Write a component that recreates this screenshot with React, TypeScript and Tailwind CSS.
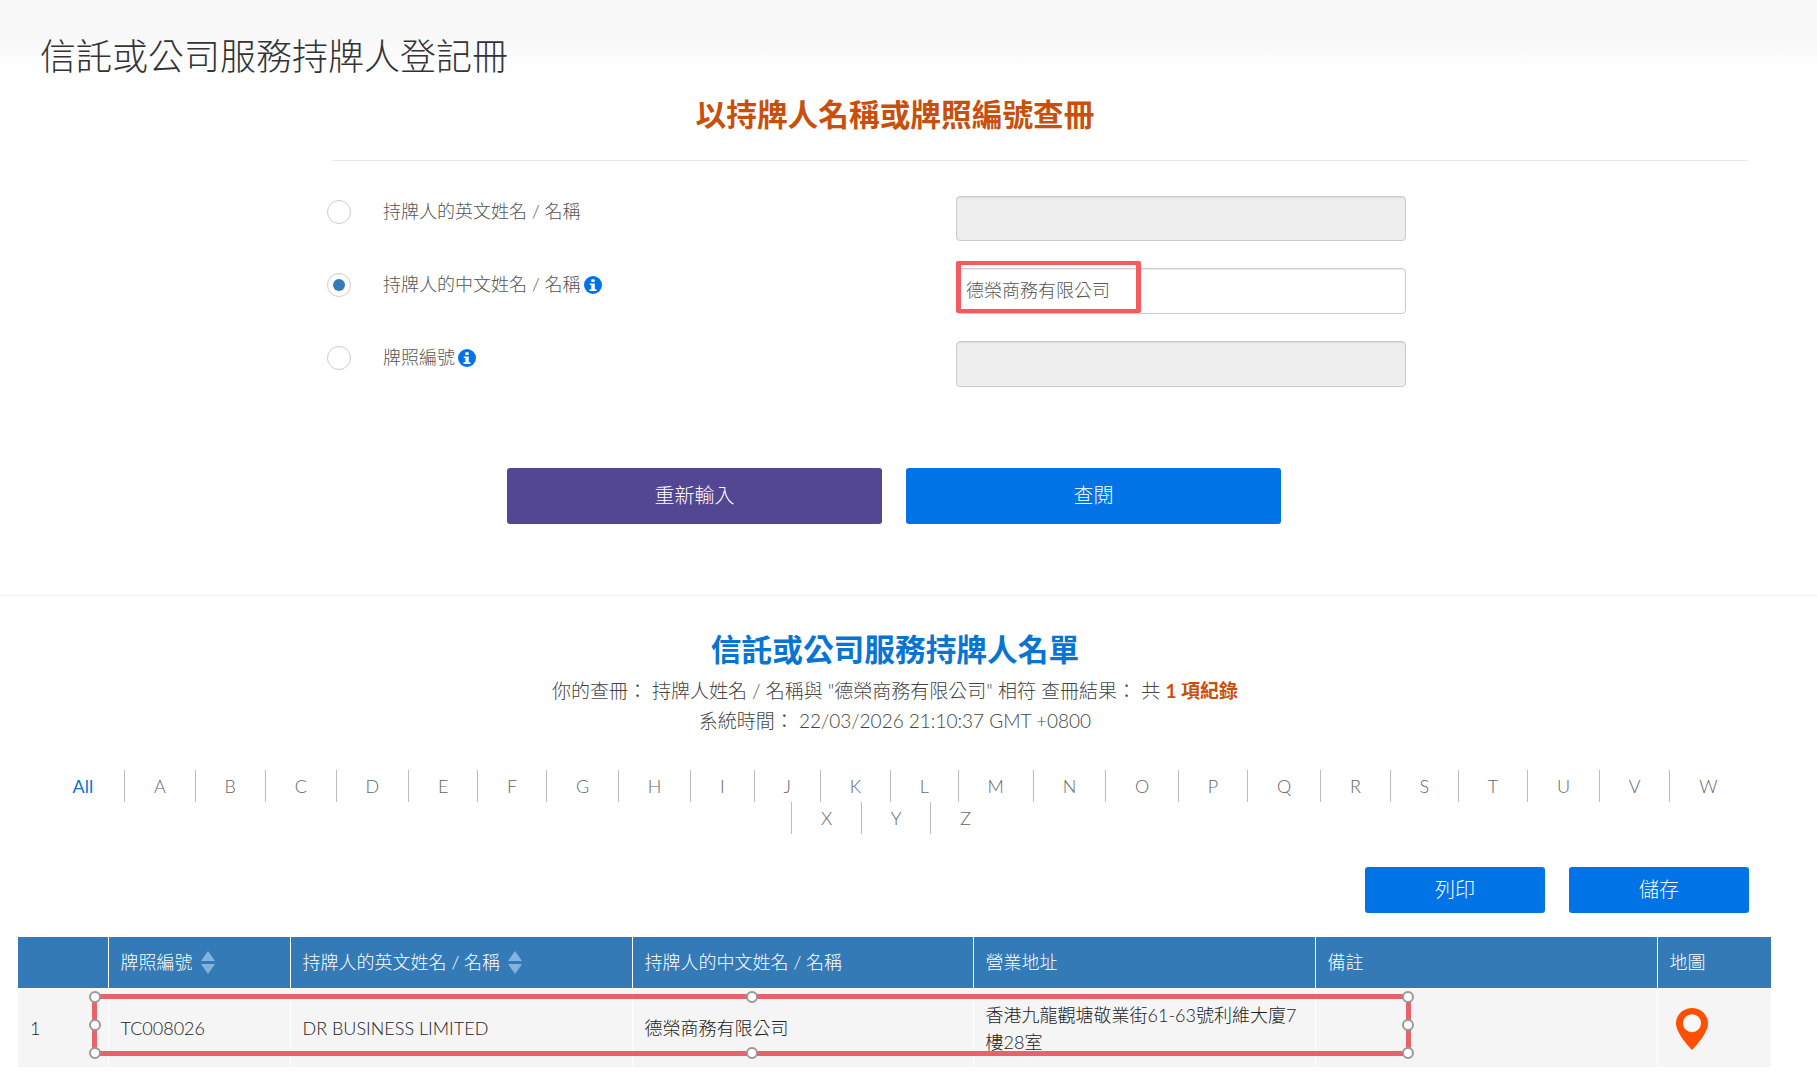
import React from "react";

const letters = ["A","B","C","D","E","F","G","H","I","J","K","L","M","N","O","P","Q","R","S","T","U","V","W","X","Y","Z"];

function InfoIcon() {
  return (
    <svg viewBox="0 0 18 18" className="w-[18px] h-[18px] shrink-0 ml-[3px]">
      <circle cx="9" cy="9" r="9" fill="#0073e6" />
      <rect x="7.2" y="3.2" width="3.6" height="2.8" rx="1" fill="#fff" />
      <path d="M5.8 7.4h5v5.8h1.7V15h-7v-1.8h1.8V9.1H5.8z" fill="#fff" />
    </svg>
  );
}

function SortIcon() {
  return (
    <svg viewBox="0 0 14 23" className="w-[14px] h-[23px] ml-[8px] shrink-0">
      <path d="M7 0L14 10H0z" fill="#83b4e0" />
      <path d="M7 23L0 13h14z" fill="#83b4e0" />
    </svg>
  );
}

function PinIcon() {
  return (
    <svg viewBox="0 0 32 42" className="w-[32px] h-[42px] ml-[18px]">
      <path d="M16 0C7 0 0 7 0 15.5 0 26 16 42 16 42s16-16 16-26.5C32 7 25 0 16 0z" fill="#ff4f00" />
      <circle cx="16" cy="15.2" r="9" fill="#f8f8f8" />
    </svg>
  );
}

function FormRow({ label, checked, info, value, inputClass }: { label: string; checked?: boolean; info?: boolean; value?: string; inputClass?: string }) {
  return (
    <div className="flex h-[73px] items-start">
      <div className="w-[56px] pt-[5px]">
        <span className="flex w-[24px] h-[24px] items-center justify-center rounded-full border border-[#ccc] bg-white">
          {checked && <span className="w-[12px] h-[12px] rounded-full bg-[#337ab7]" />}
        </span>
      </div>
      <div className="w-[573px] flex items-center h-[27px] mt-[3px] text-[18px] text-[#555] font-light">
        <span>{label}</span>
        {info && <InfoIcon />}
      </div>
      <div className="relative w-[450px]">
        <input
          readOnly
          disabled={!checked}
          value={value ?? ""}
          className={`w-full px-[9px] pb-[4px] rounded-[4px] border border-[#ccc] text-[18px] font-light text-[#555] shadow-[inset_0_1px_1px_rgba(0,0,0,0.08)] ${checked ? "bg-white" : "bg-[#eee]"} ${inputClass ?? "h-[46px]"}`}
        />
        {checked && <div className="absolute left-0 top-[-7px] w-[185px] h-[52px] rounded-[2px] border-x-[5px] border-y-[4px] border-[#f55a5f]" />}
      </div>
    </div>
  );
}

const columns = [
  { w: "w-[90px]", label: "" },
  { w: "w-[182px]", label: "牌照編號", sort: true },
  { w: "w-[342px]", label: "持牌人的英文姓名 / 名稱", sort: true },
  { w: "w-[341px]", label: "持牌人的中文姓名 / 名稱" },
  { w: "w-[342px]", label: "營業地址" },
  { w: "w-[342px]", label: "備註" },
  { w: "w-[114px]", label: "地圖" },
];

function Handle({ className }: { className: string }) {
  return <span className={`absolute w-[12px] h-[12px] -ml-[6px] -mt-[6px] rounded-full border-[2px] border-[#999] bg-white ${className}`} />;
}

export default function App() {
  return (
    <div className="w-[1817px] h-[1071px] overflow-hidden bg-white font-['Lato','Noto_Sans_CJK_TC',sans-serif] text-[#333]">
      <div className="h-[91px] pt-[32px] pl-[40px] text-[36px] leading-[48px] font-light bg-gradient-to-b from-[#f8f8f8] from-40% to-white to-80%">
        信託或公司服務持牌人登記冊
      </div>
      <div className="w-[1790px] text-center text-[30.7px] leading-[48px] font-bold text-[#c9500c]">以持牌人名稱或牌照編號查冊</div>
      <div className="mt-[21px] ml-[332px] w-[1416px] h-px bg-[#e8e8e8]" />

      <div className="mt-[34px] ml-[327px]">
        <FormRow label="持牌人的英文姓名 / 名稱" inputClass="h-[45px] mt-[1px]" />
        <FormRow label="持牌人的中文姓名 / 名稱" checked info value="德榮商務有限公司" />
        <FormRow label="牌照編號" info />
      </div>

      <div className="mt-[54px] ml-[507px] flex gap-[24px]">
        <button className="w-[375px] h-[56px] pb-[2px] rounded-[3px] bg-[#534693] text-white text-[20px] font-light">重新輸入</button>
        <button className="w-[375px] h-[56px] pb-[2px] rounded-[3px] bg-[#0073e6] text-white text-[20px] font-light">查閱</button>
      </div>

      <div className="mt-[71px] h-px bg-[#eee]" />

      <div className="mt-[30px] w-[1790px] text-center text-[30.7px] leading-[48px] font-bold text-[#0a74d2]">信託或公司服務持牌人名單</div>
      <div className="mt-[2px] w-[1790px] text-center text-[19px] leading-[30px] font-light text-[#444]">
        你的查冊： 持牌人姓名 / 名稱與 "德榮商務有限公司" 相符 查冊結果： 共 <span className="font-bold text-[#c9500c]">1 項紀錄</span>
      </div>
      <div className="w-[1790px] text-center text-[19px] leading-[30px] font-light text-[#444]">
        系統時間： 22/03/2026 21:10:37 GMT +0800
      </div>

      <div className="mt-[34px] ml-[19px] w-[1753px] flex flex-wrap justify-center text-[18px] leading-[32px] font-light text-[#666]">
        <a className="pl-[28px] pr-[31px] text-[#0a74d2] font-normal">All</a>
        {letters.map((l) => (
          <a key={l} className="px-[28.85px] border-l border-[#bbb]">{l}</a>
        ))}
      </div>

      <div className="mt-[33px] ml-[1365px] flex gap-[24px]">
        <button className="w-[180px] h-[46px] pb-[2px] rounded-[3px] bg-[#0073e6] text-white text-[20px] font-light">列印</button>
        <button className="w-[180px] h-[46px] pb-[2px] rounded-[3px] bg-[#0073e6] text-white text-[20px] font-light">儲存</button>
      </div>

      <div className="relative mt-[24px] ml-[18px] w-[1753px]">
        <table className="w-full table-fixed text-[18px] font-light">
          <thead>
            <tr className="bg-[#337ab7] text-white h-[52px]">
              {columns.map((c, i) => (
                <th key={i} className={`${c.w} px-[12px] text-left font-light ${i > 0 ? "border-l border-white" : ""}`}>
                  <span className="flex items-center">
                    {c.label}
                    {c.sort && <SortIcon />}
                  </span>
                </th>
              ))}
            </tr>
          </thead>
          <tbody>
            <tr className="bg-[#f5f5f5] h-[78px] text-[#222] border-t-[2px] border-[#fafafa]">
              <td className="px-[12px]">1</td>
              <td className="px-[12px] border-l border-white">TC008026</td>
              <td className="px-[12px] border-l border-white">DR BUSINESS LIMITED</td>
              <td className="px-[12px] border-l border-white">德榮商務有限公司</td>
              <td className="px-[12px] border-l border-white leading-[27px]">香港九龍觀塘敬業街61-63號利維大廈7樓28室</td>
              <td className="px-[12px] border-l border-white" />
              <td className="border-l border-white"><PinIcon /></td>
            </tr>
          </tbody>
        </table>
        {/* red annotation drawn over the first row */}
        <div className="absolute left-[74px] top-[57px] w-[1319px] h-[62px] border-[5px] border-[#e6636c] pointer-events-none" />
        <div className="absolute left-[77px] top-[60px] w-[1313px] h-[56px] pointer-events-none">
          <Handle className="left-0 top-0" />
          <Handle className="left-1/2 top-0" />
          <Handle className="left-full top-0" />
          <Handle className="left-0 top-1/2" />
          <Handle className="left-full top-1/2" />
          <Handle className="left-0 top-full" />
          <Handle className="left-1/2 top-full" />
          <Handle className="left-full top-full" />
        </div>
      </div>
    </div>
  );
}
